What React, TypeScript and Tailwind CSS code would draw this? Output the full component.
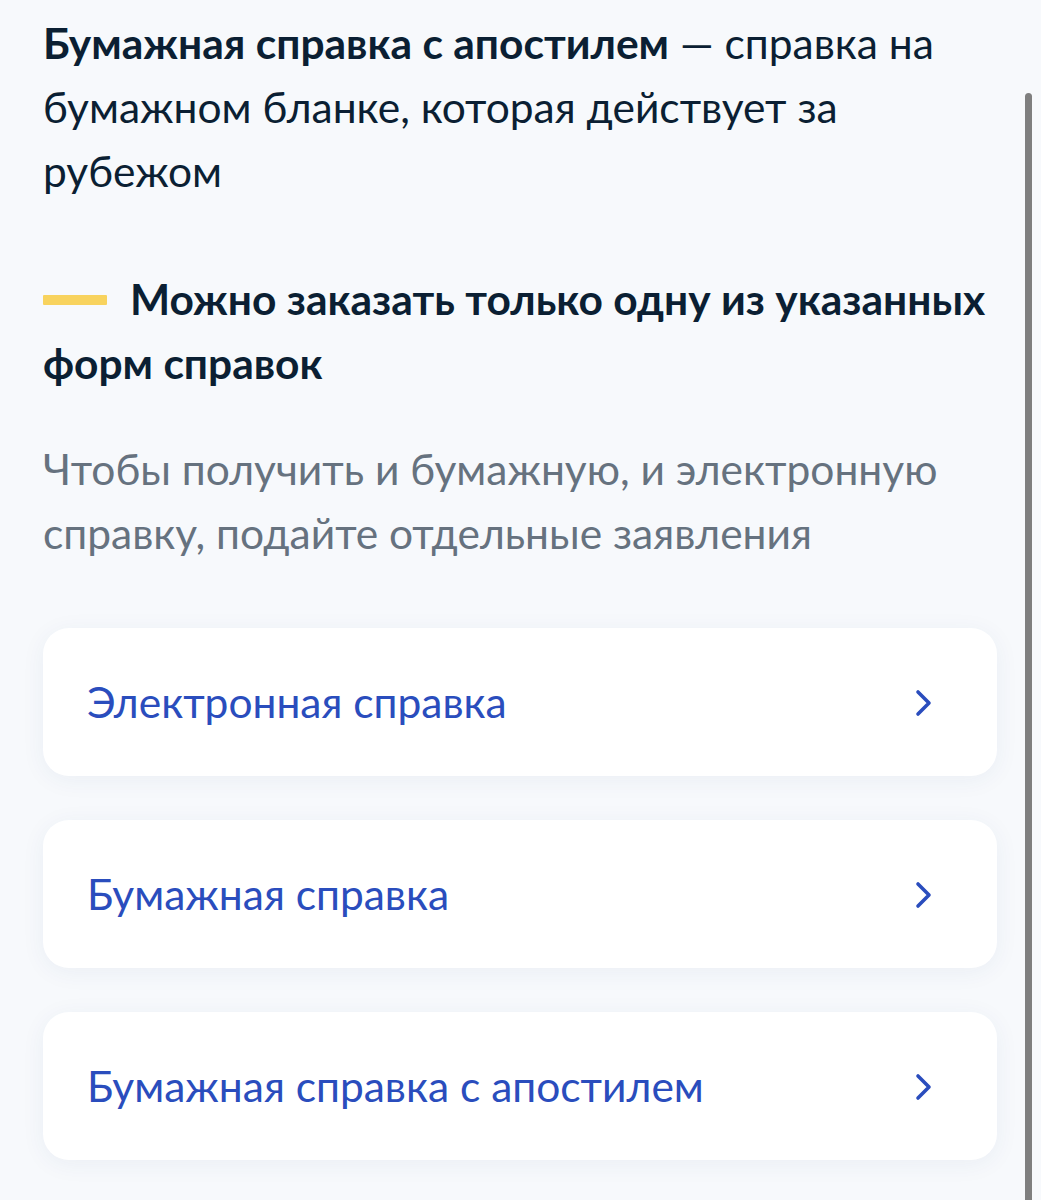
import React from 'react';

const options = ['Электронная справка', 'Бумажная справка', 'Бумажная справка с апостилем'];

function Chevron() {
  return (
    <svg width="18" height="28" viewBox="0 0 18 28" fill="none" className="shrink-0 translate-y-[1px]">
      <path d="M3 3l11 11L3 25" stroke="#2a4dbd" strokeWidth="3.6" strokeLinecap="round" strokeLinejoin="round" />
    </svg>
  );
}

export default function App() {
  return (
    <div className="relative min-h-[1200px] w-[1041px] overflow-hidden bg-[#f7f9fc] font-['Lato','Noto_Sans',sans-serif] text-[#0b1f33]">
      <div className="pl-[43px] pr-[44px] pt-[11px]">
        {/* Description */}
        <p className="text-[42.5px] leading-[64px]">
          <span className="font-bold">Бумажная справка с апостилем</span> — справка на бумажном бланке, которая действует за рубежом
        </p>

        {/* Warning heading */}
        <h2 className="mt-[64px] text-[42.5px] font-bold leading-[64px]">
          <span className="mr-[23px] inline-block h-[10px] w-[64px] translate-y-[-4px] rounded-[1px] bg-[#f8d35e] align-middle" />
          Можно заказать только одну из указанных форм справок
        </h2>

        <p className="mt-[42px] text-[42.5px] leading-[64px] text-[#66727f]">
          Чтобы получить и бумажную, и электронную справку, подайте отдельные заявления
        </p>

        {/* Options */}
        <div className="mt-[63px] flex flex-col gap-[44px]">
          {options.map((label) => (
            <div
              key={label}
              className="flex h-[148px] items-center justify-between rounded-[26px] bg-white pl-[44px] pr-[64px] shadow-[0_4px_24px_rgba(30,60,120,0.06)]"
            >
              <span className="text-[42.5px] text-[#2a4dbd]">{label}</span>
              <Chevron />
            </div>
          ))}
        </div>
      </div>

      {/* scroll indicator */}
      <div className="absolute left-[1025px] top-[93px] h-[1110px] w-[7px] rounded-t-full bg-[#7f7f7f]" />
    </div>
  );
}
